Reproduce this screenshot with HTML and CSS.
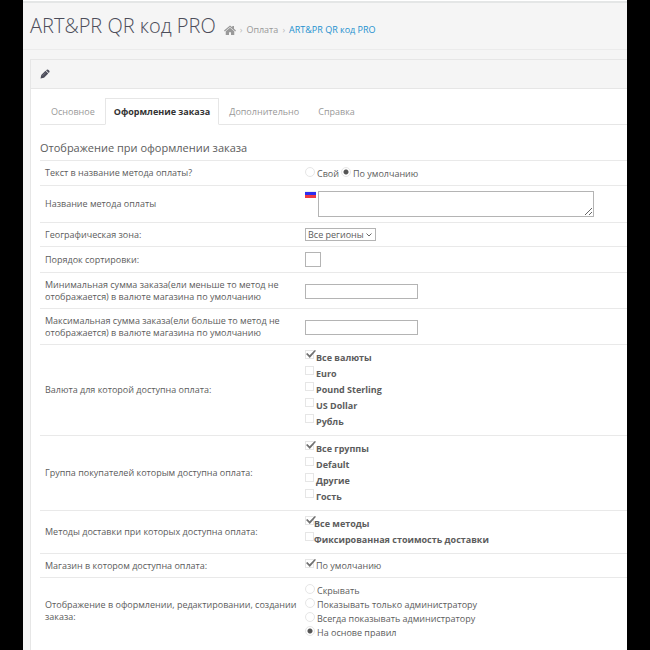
FILE: index.html
```html
<!DOCTYPE html>
<html lang="ru">
<head>
  <meta charset="UTF-8">
  <meta name="viewport" content="width=device-width, initial-scale=1.0">
  <title>ART&amp;PR QR код PRO</title>
  <link rel="stylesheet" href="styles.css">
</head>
<body>
  <div class="page">
    <header class="page-header">
      <h1>ART&amp;PR QR код PRO</h1>
      <nav class="breadcrumb">
        <a href="#" aria-label="Главная">
          <svg class="icon-home" viewBox="0 0 24 20"><path d="M12 1 0 11l1.500 1.800L12 4l10.500 8.800L24 11l-4-3.400V2h-3.500v2.700z"/><path d="M12 5.500 3.500 12.600V20H10v-5.500h4V20h6.500v-7.400z"/></svg>
        </a>
        <span class="sep">›</span>
        <a href="#">Оплата</a>
        <span class="sep">›</span>
        <a href="#" class="current">ART&amp;PR QR код PRO</a>
      </nav>
    </header>

    <main class="panel">
      <div class="panel-heading">
        <svg class="icon-pencil" viewBox="0 0 20 20"><path d="M1 19l1.500-7L11 3.500 16.500 9 8 17.500z"/><path d="M12 2.500 13.700 1.300q1.300-1 2.600 0l2.400 2.400q1 1.300 0 2.600L17.500 8z"/><path d="M5 13.500 11.500 7" class="shine"/></svg>
      </div>
      <form class="panel-body">
        <nav class="tabs">
          <a href="#">Основное</a>
          <a href="#" class="active">Оформление заказа</a>
          <a href="#">Дополнительно</a>
          <a href="#">Справка</a>
        </nav>

        <h2>Отображение при оформлении заказа</h2>

        <div class="row" role="group" aria-labelledby="l-text">
          <span class="name" id="l-text">Текст в название метода оплаты?</span>
          <div class="field inline">
            <label class="radio"><input type="radio" name="text">Свой</label>
            <label class="radio"><input type="radio" name="text" checked>По умолчанию</label>
          </div>
        </div>
        <div class="row">
          <label class="name" for="title">Название метода оплаты</label>
          <div class="field title-field">
            <svg class="flag" viewBox="0 0 11 7"><path fill="#eeeeee" d="M0 0h11v1H0z"/><path fill="#2d2df0" d="M0 1h11v3H0z"/><path fill="#ee3a44" d="M0 4h11v3H0z"/></svg>
            <textarea id="title"></textarea>
          </div>
        </div>
        <div class="row">
          <label class="name" for="zone">Географическая зона:</label>
          <div class="field">
            <select id="zone"><option>Все регионы</option></select>
          </div>
        </div>
        <div class="row">
          <label class="name" for="sort">Порядок сортировки:</label>
          <div class="field"><input type="text" class="short" id="sort"></div>
        </div>
        <div class="row amount">
          <label class="name" for="min">Минимальная сумма заказа(ели меньше то метод не отображается) в валюте магазина по умолчанию</label>
          <div class="field"><input type="text" id="min"></div>
        </div>
        <div class="row amount">
          <label class="name" for="max">Максимальная сумма заказа(ели больше то метод не отображается) в валюте магазина по умолчанию</label>
          <div class="field"><input type="text" id="max"></div>
        </div>
        <div class="row" role="group" aria-labelledby="l-currency">
          <span class="name" id="l-currency">Валюта для которой доступна оплата:</span>
          <div class="field list">
            <label class="check"><input type="checkbox" checked>Все валюты</label>
            <label class="check"><input type="checkbox">Euro</label>
            <label class="check"><input type="checkbox">Pound Sterling</label>
            <label class="check"><input type="checkbox">US Dollar</label>
            <label class="check"><input type="checkbox">Рубль</label>
          </div>
        </div>
        <div class="row" role="group" aria-labelledby="l-group">
          <span class="name" id="l-group">Группа покупателей которым доступна оплата:</span>
          <div class="field list">
            <label class="check"><input type="checkbox" checked>Все группы</label>
            <label class="check"><input type="checkbox">Default</label>
            <label class="check"><input type="checkbox">Другие</label>
            <label class="check"><input type="checkbox">Гость</label>
          </div>
        </div>
        <div class="row" role="group" aria-labelledby="l-shipping">
          <span class="name" id="l-shipping">Методы доставки при которых доступна оплата:</span>
          <div class="field list">
            <label class="check tight"><input type="checkbox" checked>Все методы</label>
            <label class="check tight"><input type="checkbox">Фиксированная стоимость доставки</label>
          </div>
        </div>
        <div class="row" role="group" aria-labelledby="l-store">
          <span class="name" id="l-store">Магазин в котором доступна оплата:</span>
          <div class="field">
            <label class="check single"><input type="checkbox" checked>По умолчанию</label>
          </div>
        </div>
        <div class="row" role="group" aria-labelledby="l-show">
          <span class="name" id="l-show">Отображение в оформлении, редактировании, создании заказа:</span>
          <div class="field">
            <label class="radio"><input type="radio" name="show">Скрывать</label>
            <label class="radio"><input type="radio" name="show">Показывать только администратору</label>
            <label class="radio"><input type="radio" name="show">Всегда показывать администратору</label>
            <label class="radio"><input type="radio" name="show" checked>На основе правил</label>
          </div>
        </div>
      </form>
    </main>
  </div>
</body>
</html>
```
FILE: styles.css
```css
* {
  box-sizing: border-box;
}
body {
  margin: 0;
  padding: 0 23px;
  background: #000;
  color: #5c5c5c;
  font: 9px/12px "Open Sans", sans-serif;
}
a {
  color: #999;
  text-decoration: none;
}
.page {
  display: flex;
  flex-direction: column;
  min-height: 100vh;
  border-top: 1px solid #fff;
  background: #f5f5f5;
}
.page-header {
  display: flex;
  align-items: center;
  height: 49px;
  padding: 0 7px;
  border-top: 2px solid #e4e6e6;
  border-bottom: 1px solid #ebebeb;
}
h1 {
  margin: 0 8px 0 0;
  color: #4c4d5a;
  font-size: 20px;
  font-weight: 300;
  line-height: 26px;
}
.breadcrumb {
  display: flex;
  align-items: center;
  gap: 4px;
  padding-top: 8px;
}
.breadcrumb .current {
  color: #1e91cf;
}
.sep {
  color: #bbb;
}
.icon-home {
  display: block;
  width: 12px;
  height: 10px;
  fill: #999;
}
.panel {
  flex: 1;
  margin: 9px 0 0 7px;
  border-top: 1px solid #e6e6e6;
  border-left: 1px solid #e6e6e6;
  background: #fff;
}
.panel-heading {
  padding: 9px;
  border-bottom: 1px solid #e6e6e6;
  background: #f5f5f5;
}
.icon-pencil {
  display: block;
  width: 10px;
  height: 10px;
  fill: #4c4d5a;
}
.icon-pencil .shine {
  stroke: #9a9aa2;
}
.panel-body {
  padding: 9px 0 0 9px;
}
.tabs {
  display: flex;
  gap: 1px;
  border-bottom: 1px solid #e6e6e6;
}
.tabs a {
  margin-bottom: -1px;
  padding: 7px 8px 6px;
  border: 1px solid transparent;
}
.tabs a:first-child {
  padding-left: 10px;
}
.tabs .active {
  border-color: #e6e6e6;
  border-bottom-color: #fff;
  background: #fff;
  color: #333;
  font-weight: 700;
}
h2 {
  margin: 14px 0 3px;
  font-size: 11px;
  font-weight: 400;
  line-height: 18px;
}
.row {
  display: flex;
  align-items: center;
  padding: 5px;
  border-top: 1px solid #e9e9e9;
}
.row.amount {
  padding-top: 6px;
}
.name {
  flex: 0 0 254px;
  margin-right: 6px;
}
.field {
  flex: 1;
}
.inline {
  display: flex;
  gap: 2px;
}
.list {
  font-weight: 700;
}
.radio,
.check {
  display: flex;
}
.radio {
  gap: 2px;
  height: 14px;
  padding-top: 1px;
  line-height: 14px;
}
.check {
  gap: 2px;
  line-height: 16px;
}
.check.tight {
  gap: 0;
}
.check.single {
  line-height: 13px;
}
input,
select,
textarea {
  display: block;
  margin: 0;
  border: 1px solid #b4b4b4;
  border-radius: 0;
  background: #fff;
  color: #5c5c5c;
  font: inherit;
}
input[type="text"] {
  width: 113px;
  height: 15px;
  padding: 0 2px;
}
input.short {
  width: 16px;
}
input[type="radio"],
input[type="checkbox"] {
  flex: none;
  appearance: none;
  border-color: #e6e6e6;
}
input[type="radio"] {
  width: 10px;
  height: 10px;
  border-radius: 50%;
}
input[type="radio"]:checked {
  background: radial-gradient(circle, #555 2px, #fff 3px);
}
input[type="checkbox"] {
  position: relative;
  width: 9px;
  height: 9px;
}
input[type="checkbox"]:checked::after {
  content: "";
  position: absolute;
  top: -1px;
  left: 0;
  width: 10px;
  height: 8px;
  background: #707070;
  clip-path: polygon(0 50%, 14% 38%, 36% 66%, 88% 0, 100% 8%, 38% 100%);
}
select {
  width: 71px;
  height: 13px;
  padding: 0 2px;
  appearance: none;
  background: url("data:image/svg+xml,%3Csvg xmlns='http://www.w3.org/2000/svg' viewBox='0 0 6 4'%3E%3Cpath d='M.5.5 3 3 5.500.5' fill='none' stroke='%23666'/%3E%3C/svg%3E") no-repeat right 3px center / 6px 4px;
  line-height: 11px;
}
.title-field {
  display: flex;
  align-items: flex-start;
  gap: 2px;
}
.flag {
  width: 11px;
  height: 7px;
}
textarea {
  width: 276px;
  height: 26px;
  padding: 2px;
}
```
